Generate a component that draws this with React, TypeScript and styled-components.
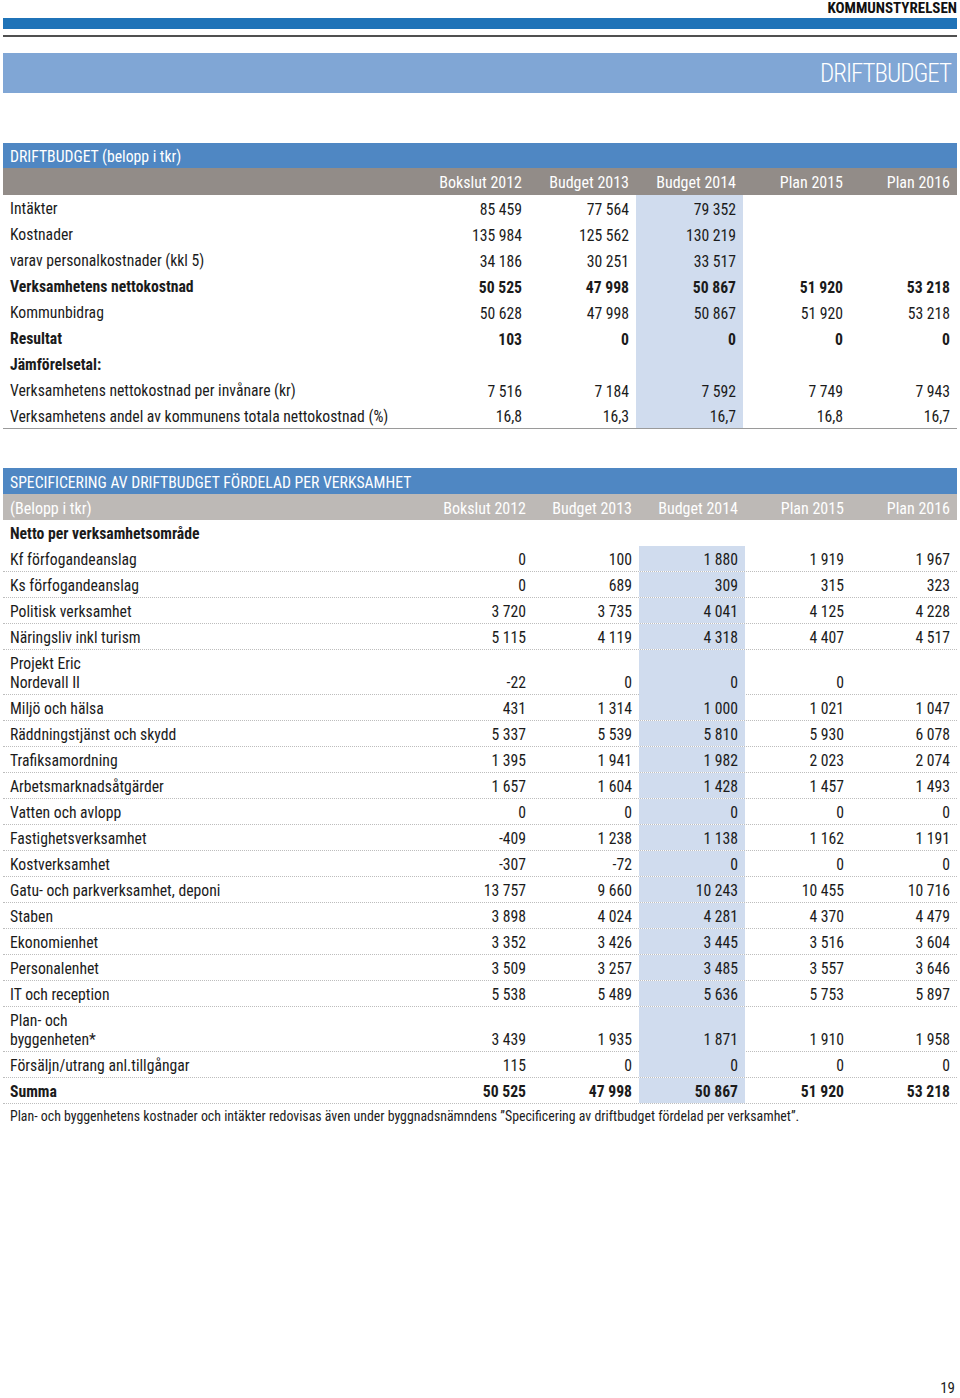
import React from 'react';
import styled, { createGlobalStyle } from 'styled-components';

const Global = createGlobalStyle`
  html, body { margin: 0; padding: 0; background: #fff; }
  body {
    font-family: "Liberation Sans Narrow", "Arial Narrow", "Roboto Condensed", "Liberation Sans", sans-serif;
    font-weight: 400;
    color: #1b1b1b;
  }
`;

const Page = styled.div`
  width: 960px;
  height: 1398px;
  box-sizing: border-box;
  padding: 0 3px;
  display: flex;
  flex-direction: column;
`;

const TopLabel = styled.div`
  height: 18px;
  text-align: right;
  font-weight: bold;
  font-size: 15px;
  line-height: 17px;
  color: #111;
`;

const BlueBar = styled.div`
  height: 11px;
  background: #1f73b8;
`;

const Rule = styled.div`
  margin-top: 6px;
  height: 2px;
  background: #505050;
`;

const Band = styled.div`
  margin-top: 16px;
  height: 40px;
  background: #80a6d5;
  display: flex;
  align-items: center;
  justify-content: flex-end;
  padding-right: 6px;
  color: #fff;
  font-size: 25px;
  font-weight: 300;
  letter-spacing: -1px;
`;

const Table = styled.section<{ $top: number }>`
  margin-top: ${(p) => p.$top}px;
  display: flex;
  flex-direction: column;
`;

const TitleRow = styled.div<{ $h: number }>`
  height: ${(p) => p.$h}px;
  box-sizing: border-box;
  padding: 2px 0 0 7px;
  background: #4f87c3;
  color: #fff;
  font-size: 15.7px;
  display: flex;
  align-items: center;
`;

const Row = styled.div<{ $col: number; $dotted?: boolean; $bold?: boolean; $tall?: boolean; $bottomLine?: boolean }>`
  display: grid;
  grid-template-columns: 1fr repeat(5, ${(p) => p.$col}px);
  height: ${(p) => (p.$tall ? 45 : 26)}px;
  box-sizing: border-box;
  font-size: 15.7px;
  font-weight: ${(p) => (p.$bold ? 'bold' : 400)};
  border-bottom: ${(p) => (p.$bottomLine ? '1px solid #9a9a9a' : p.$dotted ? '1px dotted #bdbdbd' : 'none')};
`;

const HeadRow = styled.div<{ $col: number; $bg: string; $h: number }>`
  display: grid;
  grid-template-columns: 1fr repeat(5, ${(p) => p.$col}px);
  height: ${(p) => p.$h}px;
  background: ${(p) => p.$bg};
  color: #fff;
  font-size: 16px;
`;

const HeadCell = styled.div<{ $left?: boolean }>`
  display: flex;
  align-items: center;
  justify-content: ${(p) => (p.$left ? 'flex-start' : 'flex-end')};
  padding: 2px 7px 0;
  white-space: nowrap;
`;

const LabelCell = styled.div<{ $tall?: boolean }>`
  display: flex;
  flex-direction: column;
  justify-content: ${(p) => (p.$tall ? 'flex-start' : 'center')};
  padding: ${(p) => (p.$tall ? '4px 7px 3px' : '2px 7px 0')};
  line-height: ${(p) => (p.$tall ? 19 : 20)}px;
  white-space: nowrap;
`;

const NumCell = styled.div<{ $hl?: boolean; $tall?: boolean }>`
  display: flex;
  align-items: ${(p) => (p.$tall ? 'flex-end' : 'center')};
  justify-content: flex-end;
  padding: ${(p) => (p.$tall ? '0 7px 3px' : '2px 7px 0')};
  line-height: 19px;
  background: ${(p) => (p.$hl ? '#d0dcee' : 'transparent')};
  white-space: nowrap;
`;

const Footnote = styled.div`
  font-size: 13.85px;
  padding: 4px 7px 0;
  line-height: 16px;
`;

const PageNo = styled.div`
  margin-top: auto;
  text-align: right;
  padding: 0 2px 2px 0;
  font-size: 15px;
  line-height: 16px;
  height: 16px;
  color: #222;
`;

type R = { label: string[]; vals: string[]; bold?: boolean; noHl?: boolean };

const headers = ['Bokslut 2012', 'Budget 2013', 'Budget 2014', 'Plan 2015', 'Plan 2016'];

const t1: R[] = [
  { label: ['Intäkter'], vals: ['85 459', '77 564', '79 352', '', ''] },
  { label: ['Kostnader'], vals: ['135 984', '125 562', '130 219', '', ''] },
  { label: ['varav personalkostnader (kkl 5)'], vals: ['34 186', '30 251', '33 517', '', ''] },
  { label: ['Verksamhetens nettokostnad'], vals: ['50 525', '47 998', '50 867', '51 920', '53 218'], bold: true },
  { label: ['Kommunbidrag'], vals: ['50 628', '47 998', '50 867', '51 920', '53 218'] },
  { label: ['Resultat'], vals: ['103', '0', '0', '0', '0'], bold: true },
  { label: ['Jämförelsetal:'], vals: ['', '', '', '', ''], bold: true },
  { label: ['Verksamhetens nettokostnad per invånare (kr)'], vals: ['7 516', '7 184', '7 592', '7 749', '7 943'] },
  { label: ['Verksamhetens andel av kommunens totala nettokostnad (%)'], vals: ['16,8', '16,3', '16,7', '16,8', '16,7'] },
];

const t2: R[] = [
  { label: ['Kf förfogandeanslag'], vals: ['0', '100', '1 880', '1 919', '1 967'] },
  { label: ['Ks förfogandeanslag'], vals: ['0', '689', '309', '315', '323'] },
  { label: ['Politisk verksamhet'], vals: ['3 720', '3 735', '4 041', '4 125', '4 228'] },
  { label: ['Näringsliv inkl turism'], vals: ['5 115', '4 119', '4 318', '4 407', '4 517'] },
  { label: ['Projekt Eric', 'Nordevall II'], vals: ['-22', '0', '0', '0', ''] },
  { label: ['Miljö och hälsa'], vals: ['431', '1 314', '1 000', '1 021', '1 047'] },
  { label: ['Räddningstjänst och skydd'], vals: ['5 337', '5 539', '5 810', '5 930', '6 078'] },
  { label: ['Trafiksamordning'], vals: ['1 395', '1 941', '1 982', '2 023', '2 074'] },
  { label: ['Arbetsmarknadsåtgärder'], vals: ['1 657', '1 604', '1 428', '1 457', '1 493'] },
  { label: ['Vatten och avlopp'], vals: ['0', '0', '0', '0', '0'] },
  { label: ['Fastighetsverksamhet'], vals: ['-409', '1 238', '1 138', '1 162', '1 191'] },
  { label: ['Kostverksamhet'], vals: ['-307', '-72', '0', '0', '0'] },
  { label: ['Gatu- och parkverksamhet, deponi'], vals: ['13 757', '9 660', '10 243', '10 455', '10 716'] },
  { label: ['Staben'], vals: ['3 898', '4 024', '4 281', '4 370', '4 479'] },
  { label: ['Ekonomienhet'], vals: ['3 352', '3 426', '3 445', '3 516', '3 604'] },
  { label: ['Personalenhet'], vals: ['3 509', '3 257', '3 485', '3 557', '3 646'] },
  { label: ['IT och reception'], vals: ['5 538', '5 489', '5 636', '5 753', '5 897'] },
  { label: ['Plan- och', 'byggenheten*'], vals: ['3 439', '1 935', '1 871', '1 910', '1 958'] },
  { label: ['Försäljn/utrang anl.tillgångar'], vals: ['115', '0', '0', '0', '0'] },
  { label: ['Summa'], vals: ['50 525', '47 998', '50 867', '51 920', '53 218'], bold: true },
];

function DataRow({ r, col, dotted, last }: { r: R; col: number; dotted?: boolean; last?: boolean }) {
  const tall = r.label.length > 1;
  return (
    <Row $col={col} $dotted={dotted} $bold={r.bold} $tall={tall} $bottomLine={last}>
      <LabelCell $tall={tall}>
        {r.label.map((l) => (
          <span key={l}>{l}</span>
        ))}
      </LabelCell>
      {r.vals.map((v, i) => (
        <NumCell key={i} $hl={i === 2 && !r.noHl} $tall={tall}>
          {v}
        </NumCell>
      ))}
    </Row>
  );
}

export default function App() {
  return (
    <>
      <Global />
      <Page>
        <TopLabel>KOMMUNSTYRELSEN</TopLabel>
        <BlueBar />
        <Rule />
        <Band>DRIFTBUDGET</Band>

        <Table $top={50}>
          <TitleRow $h={25}>DRIFTBUDGET (belopp i tkr)</TitleRow>
          <HeadRow $col={107} $h={27} $bg="#928c88">
            <HeadCell $left />
            {headers.map((h) => (
              <HeadCell key={h}>{h}</HeadCell>
            ))}
          </HeadRow>
          {t1.map((r, i) => (
            <DataRow key={r.label[0]} r={r} col={107} last={i === t1.length - 1} />
          ))}
        </Table>

        <Table $top={39}>
          <TitleRow $h={26}>SPECIFICERING AV DRIFTBUDGET FÖRDELAD PER VERKSAMHET</TitleRow>
          <HeadRow $col={106} $h={26} $bg="#bdb9b6">
            <HeadCell $left>(Belopp i tkr)</HeadCell>
            {headers.map((h) => (
              <HeadCell key={h}>{h}</HeadCell>
            ))}
          </HeadRow>
          <DataRow
            r={{ label: ['Netto per verksamhetsområde'], vals: ['', '', '', '', ''], bold: true, noHl: true }}
            col={106}
          />
          {t2.map((r) => (
            <DataRow key={r.label.join(' ')} r={r} col={106} dotted />
          ))}
          <Footnote>
            Plan- och byggenhetens kostnader och intäkter redovisas även under byggnadsnämndens ”Specificering av
            driftbudget fördelad per verksamhet”.
          </Footnote>
        </Table>

        <PageNo>19</PageNo>
      </Page>
    </>
  );
}
